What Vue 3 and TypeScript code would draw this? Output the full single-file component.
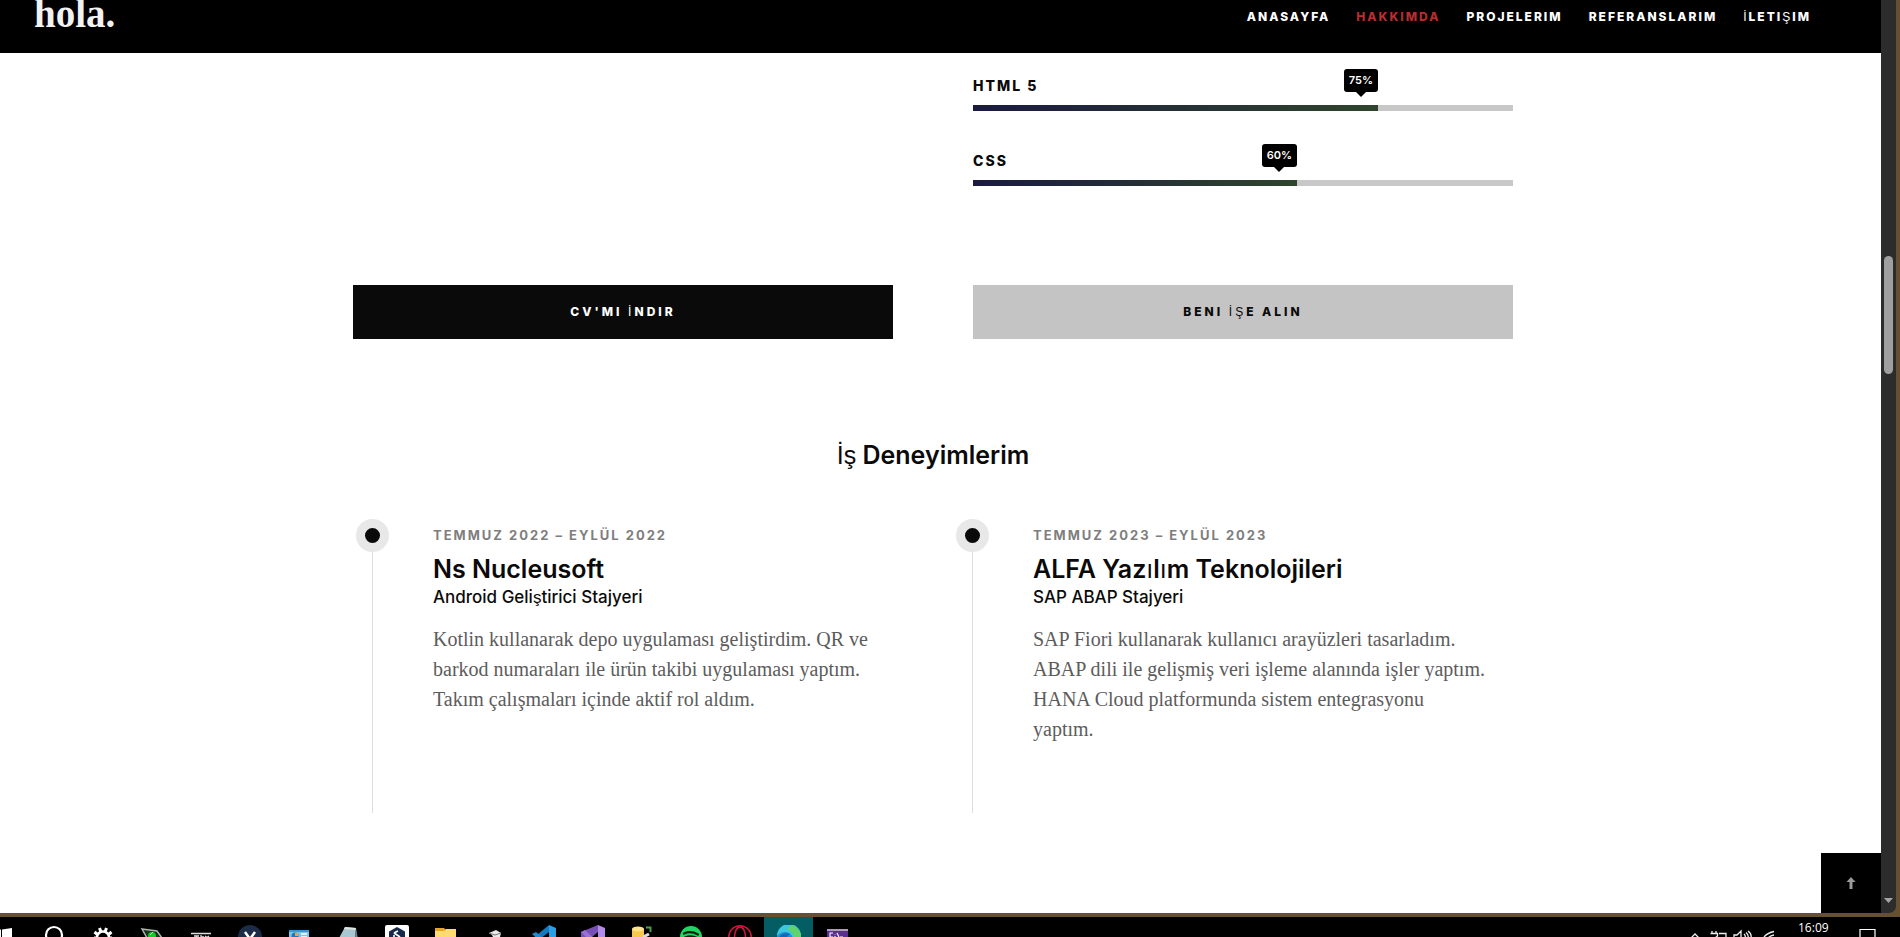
<script setup lang="ts">
import { h } from 'vue'

interface Skill { name: string; value: number }
interface Job { date: string; company: string; role: string; lines: string[] }

const nav: string[] = ['ANASAYFA', 'HAKKIMDA', 'PROJELERIM', 'REFERANSLARIM', 'İLETIŞIM']
const active = 'HAKKIMDA'

const skills: Skill[] = [
  { name: 'HTML 5', value: 75 },
  { name: 'CSS', value: 60 },
]

const jobs: Job[] = [
  {
    date: 'TEMMUZ 2022 – EYLÜL 2022',
    company: 'Ns Nucleusoft',
    role: 'Android Geliştirici Stajyeri',
    lines: [
      'Kotlin kullanarak depo uygulaması geliştirdim. QR ve',
      'barkod numaraları ile ürün takibi uygulaması yaptım.',
      'Takım çalışmaları içinde aktif rol aldım.',
    ],
  },
  {
    date: 'TEMMUZ 2023 – EYLÜL 2023',
    company: 'ALFA Yazılım Teknolojileri',
    role: 'SAP ABAP Stajyeri',
    lines: [
      'SAP Fiori kullanarak kullanıcı arayüzleri tasarladım.',
      'ABAP dili ile gelişmiş veri işleme alanında işler yaptım.',
      'HANA Cloud platformunda sistem entegrasyonu',
      'yaptım.',
    ],
  },
]

// Turkish-only letters are set in a lighter face than the rest of the word.
const Tr = (props: { text: string }) =>
  props.text
    .split(/([İŞşı]+)/)
    .filter(Boolean)
    .map((part) => (/[İŞşı]/.test(part) ? h('span', { class: 'tr-light' }, part) : part))
Tr.props = ['text']
</script>

<template>
  <div class="desktop">
    <div class="window">
      <div class="page">
        <header class="header">
          <a class="logo" href="#">hola.</a>
          <nav class="nav">
            <a v-for="item in nav" :key="item" href="#" :class="{ active: item === active }"><Tr :text="item" /></a>
          </nav>
        </header>

        <main class="content">
          <section class="skills">
            <div v-for="skill in skills" :key="skill.name" class="skill">
              <span class="skill-name">{{ skill.name }}</span>
              <div class="track" role="progressbar" :aria-label="skill.name" :aria-valuenow="skill.value">
                <div class="fill" :style="{ width: skill.value + '%' }">
                  <span class="badge">{{ skill.value }}%</span>
                </div>
              </div>
            </div>
          </section>

          <div class="actions">
            <a class="btn dark" href="#"><Tr text="CV'MI İNDIR" /></a>
            <a class="btn light" href="#"><Tr text="BENI İŞE ALIN" /></a>
          </div>

          <h2 class="heading"><Tr text="İş Deneyimlerim" /></h2>

          <section class="timeline">
            <article v-for="job in jobs" :key="job.company" class="job">
              <div class="rail"><span class="dot"></span><span class="line"></span></div>
              <div class="job-body">
                <p class="date">{{ job.date }}</p>
                <h3 class="company"><Tr :text="job.company" /></h3>
                <h4 class="role"><Tr :text="job.role" /></h4>
                <p class="text">{{ job.lines.join('\n') }}</p>
              </div>
            </article>
          </section>
        </main>

        <button class="to-top" type="button" aria-label="Yukarı">
          <svg width="10" height="14" viewBox="0 0 10 14"><path d="M5 1 9.500 6H6.500V13H3.500V6H.500z" fill="#999" /></svg>
        </button>
      </div>
      <div class="scrollbar">
        <span class="thumb"></span>
        <svg class="down" width="9" height="5" viewBox="0 0 9 5"><path d="M0 0H9L4.500 5z" fill="#a5a5a5" /></svg>
      </div>
    </div>

    <footer class="taskbar">
      <div class="apps">
        <span class="app start"><svg viewBox="0 0 24 24"><path d="M0 5.500 9 4.500V12H0zM10 4.400 20 3V12H10zM0 13H9V20L0 19zM10 13H20V22L10 20z" fill="#fff" /></svg></span>
        <span class="app"><svg viewBox="0 0 24 24"><circle cx="12" cy="10" r="8" fill="none" stroke="#fff" stroke-width="2.200" /></svg></span>
        <span class="app"><svg viewBox="0 0 24 24"><path d="M8.500 3 10 7M15.500 3 14 7M3.500 7 7 10M20.500 7 17 10M3 13H6M18 13H21" stroke="#fff" stroke-width="3" /><circle cx="12" cy="12.500" r="6" fill="none" stroke="#fff" stroke-width="2.500" /></svg></span>
        <span class="app"><svg viewBox="0 0 24 24"><path d="M2 4 17 6 22 13H7z" fill="#17351d" stroke="#aab5ac" stroke-width="1.500" /><circle cx="12" cy="11" r="4" fill="#16c92b" /><path d="M10 10 13 7" stroke="#9cff8b" /></svg></span>
        <span class="app"><svg viewBox="0 0 24 24"><path d="M2 8.500H22M5 11H10M7.500 11V14M12 10V14M12 12H15M16 11 20 14M20 11 16 14" stroke="#ddd" stroke-width="1.300" fill="none" /></svg></span>
        <span class="app"><svg viewBox="0 0 24 24"><circle cx="12" cy="12" r="12" fill="#1c2c48" /><path d="M7 7 12 14 17 7" fill="none" stroke="#fff" stroke-width="2.500" /></svg></span>
        <span class="app"><svg viewBox="0 0 24 24"><rect x="2" y="5" width="20" height="16" fill="#7cc3ee" /><rect x="2" y="5" width="20" height="2" fill="#3c94d8" /><circle cx="8" cy="11" r="3.500" fill="#1c76c4" /><path d="M8 11V7.500A3.500 3.500 0 0 1 11.500 11z" fill="#f3a23b" /><path d="M14 9H20M14 12H20" stroke="#fff" stroke-width="1.600" /></svg></span>
        <span class="app"><svg viewBox="0 0 24 24"><path d="M9 2 20 3 19 17 2 15z" fill="#a9c7d0" /><path d="M9 2 20 3 19.500 5 8 4z" fill="#dce5df" /><path d="M20 3 22 14 19 17z" fill="#6a8790" /></svg></span>
        <span class="app"><svg viewBox="0 0 24 24"><rect width="24" height="24" rx="2" fill="#fff" /><path d="M12 2 20 6.500V16L12 21 4 16V6.500z" fill="#17294b" /><path d="M9 8 15 12M9 10V14M13 6 9 8" stroke="#fff" stroke-width="1.600" /></svg></span>
        <span class="app"><svg viewBox="0 0 24 24"><path d="M1 3H10L12 5H22V20H1z" fill="#e5a524" /><path d="M1 6H10L12 4H22V20H1z" fill="#ffda70" /></svg></span>
        <span class="app"><svg viewBox="0 0 24 24"><path d="M6 8 13 5 18 8 17 12 11 14 9 10z" fill="#e9e9e9" /><path d="M6 8 12 10 18 8" fill="none" stroke="#777" /></svg></span>
        <span class="app"><svg viewBox="0 0 24 24"><path d="M17 0 24 3V21L17 24z" fill="#2a9fe5" /><path d="M17 0V7L4 17 0 14z" fill="#1679bd" /><path d="M0 9 4 7 17 18V24z" fill="#2389ce" /></svg></span>
        <span class="app"><svg viewBox="0 0 24 24"><path d="M17 0 24 3V21L17 24z" fill="#b58bea" /><path d="M17 0V7L4 18 0 16V7z" fill="#7650b6" /><path d="M0 7 4 5 17 17V24z" fill="#9a70d4" /></svg></span>
        <span class="app"><svg viewBox="0 0 24 24"><path d="M2 4V18H14V4z" fill="#f6c94b" /><ellipse cx="8" cy="4" rx="6" ry="2.500" fill="#ffe28a" /><path d="M16 2.500H20.500V7" fill="none" stroke="#4e9c49" stroke-width="2" /><path d="M13 12 19 9" stroke="#ddd" stroke-width="3" /></svg></span>
        <span class="app"><svg viewBox="0 0 24 24"><circle cx="12" cy="12" r="11" fill="#1ed760" /><path d="M5 8.500Q12 5.500 19 9.500M6 12.500Q12 10 18 13" fill="none" stroke="#05220e" stroke-width="2.200" stroke-linecap="round" /></svg></span>
        <span class="app"><svg viewBox="0 0 24 24" fill="none" stroke="#d4163c" stroke-width="1.500"><circle cx="12" cy="12" r="11.200" /><ellipse cx="12" cy="12" rx="5.500" ry="10" /></svg></span>
        <span class="app current"><svg viewBox="0 0 24 24"><circle cx="12" cy="12" r="12" fill="#1c8fd8" /><path d="M0 11A12 12 0 0 1 24 11Q24 16 17 16 15 8 9 7 3 7 0 11z" fill="#3cc7e0" /><path d="M15 0A12 12 0 0 1 24 12Q23 16 17 16 18 8 10 4z" fill="#60d36b" /><path d="M1 14Q5 6 13 9 9 11 10 16z" fill="#1368b4" /></svg></span>
        <span class="app"><svg viewBox="0 0 24 24"><rect x="1" y="4" width="21" height="17" fill="#5b2f8f" /><path d="M1 5H22" stroke="#cbbbdc" stroke-width="1.500" /><path d="M7 8H4V12H7M9 9V9.500M9 11V12M11 8 13 12M14 12H17" fill="none" stroke="#fff" stroke-width="1.100" /></svg></span>
      </div>
      <div class="tray">
        <svg width="100" height="20" viewBox="0 0 100 20" fill="none" stroke="#eee" stroke-width="1.300">
          <path d="M10 21 14 17 18 21" />
          <path d="M31 14V17M35 14V17M29.500 16.500H36.500V19L34 21M38 16.500H45V21" />
          <path d="M53 21V18H56L60 14V21M63 17Q65 19 64 21M65 15.500Q68 18 67 21M67 14Q71 17 70 21" />
          <path d="M83 20Q87 15.500 93 14.500M87 21Q89.500 18.500 93 18" />
        </svg>
        <time class="clock">16:09</time>
        <svg width="17" height="20" viewBox="0 0 17 20" fill="none" stroke="#fff" stroke-width="1.200"><path d="M1 21V12.500H16V21" /></svg>
      </div>
    </footer>
  </div>
</template>

<style>
body {
  margin: 0;
}
.tr-light {
  font-family: "Liberation Sans", Arial, sans-serif;
  font-weight: 400;
  line-height: 1;
}
</style>

<style scoped>
.desktop {
  display: flex;
  flex-direction: column;
  height: 100vh;
  overflow: hidden;
  background: #000;
  font-family: Inter, "Noto Sans", sans-serif;
  color: #0b0a0a;
}
.window {
  flex: 1;
  min-height: 0;
  display: flex;
  border: solid #67502f;
  border-width: 0 4px 4px 0;
  background: #67502f;
}
.page {
  position: relative;
  flex: 1;
  min-width: 0;
  overflow: hidden;
  background: #fff;
}
.header {
  display: flex;
  justify-content: space-between;
  align-items: flex-start;
  box-sizing: border-box;
  height: 53px;
  padding: 0 70px 0 34px;
  background: #000;
}
.logo {
  font: 700 39px/28px "Liberation Serif", serif;
  color: #f2f2f2;
  text-decoration: none;
}
.nav {
  display: flex;
  gap: 26px;
  padding-top: 7px;
}
.nav a {
  font-size: 12px;
  line-height: 20px;
  font-weight: 800;
  letter-spacing: 2px;
  color: #fff;
  text-decoration: none;
}
.nav a.active {
  color: #b52e31;
}
.content {
  max-width: 1160px;
  margin: 0 auto;
  padding: 23px 15px 0 0;
}
.skills {
  display: flex;
  flex-direction: column;
  gap: 40px;
  width: calc(50% - 40px);
  margin-left: auto;
}
.skill {
  display: flex;
  flex-direction: column;
  gap: 9px;
}
.skill-name {
  font-size: 14px;
  line-height: 20px;
  font-weight: 800;
  letter-spacing: 2px;
}
.track {
  height: 6px;
  background: #c8c8c8;
}
.fill {
  position: relative;
  height: 6px;
  background: linear-gradient(90deg, #1a1a40, #2f452c);
}
.badge {
  position: absolute;
  right: 0;
  bottom: 19px;
  padding: 0 5px;
  border-radius: 3px;
  background: #000;
  color: #fff;
  font-size: 11px;
  line-height: 23px;
  font-weight: 600;
}
.badge::after {
  content: "";
  position: absolute;
  left: 50%;
  top: 100%;
  margin-left: -5px;
  border: 5px solid transparent;
  border-top-color: #000;
  border-bottom: 0;
}
.actions {
  display: grid;
  grid-template-columns: 1fr 1fr;
  gap: 80px;
  margin-top: 99px;
}
.btn {
  font-size: 12px;
  line-height: 54px;
  font-weight: 800;
  letter-spacing: 3px;
  text-align: center;
  text-decoration: none;
}
.dark {
  background: #0b0a0a;
  color: #fff;
}
.light {
  background: #c4c4c4;
  color: #0b0a0a;
}
.heading {
  margin: 100px 0 48px;
  font-size: 25px;
  line-height: 32px;
  font-weight: 600;
  text-align: center;
}
.timeline {
  display: grid;
  grid-template-columns: 1fr 1fr;
  gap: 40px;
}
.job {
  display: flex;
  gap: 44px;
  min-height: 294px;
}
.rail {
  display: flex;
  flex-direction: column;
  align-items: center;
  width: 33px;
  flex: none;
  margin-left: 3px;
}
.dot {
  box-sizing: border-box;
  width: 33px;
  height: 33px;
  border: 9px solid #e8e8e8;
  border-radius: 50%;
  background: #0b0a0a;
}
.line {
  flex: 1;
  width: 1px;
  background: #dedede;
}
.job-body {
  flex: 1;
  padding-top: 6px;
}
.date {
  margin: 0;
  font-size: 13px;
  line-height: 20px;
  font-weight: 700;
  letter-spacing: 2px;
  color: #7e7e7e;
}
.company {
  margin: 8px 0 0;
  font-size: 25px;
  line-height: 32px;
  font-weight: 600;
}
.role {
  margin: 0;
  font-size: 17px;
  line-height: 24px;
  font-weight: 500;
}
.text {
  margin: 15px 0 0;
  font-family: "Liberation Serif", serif;
  font-size: 20px;
  line-height: 30px;
  white-space: pre-line;
  color: #5c5c5c;
}
.to-top {
  position: absolute;
  right: 0;
  bottom: 0;
  display: grid;
  place-items: center;
  width: 60px;
  height: 60px;
  padding: 0;
  border: 0;
  background: #000;
}
.scrollbar {
  display: flex;
  flex-direction: column;
  justify-content: space-between;
  align-items: center;
  width: 15px;
  padding: 256px 0 10px;
  box-sizing: border-box;
  border-radius: 0 0 7px 0;
  background: #2c2c2c;
}
.thumb {
  width: 9px;
  height: 118px;
  border-radius: 5px;
  background: #9f9f9f;
}
.taskbar {
  display: flex;
  justify-content: space-between;
  height: 20px;
  overflow: hidden;
  background: #000;
}
.apps {
  display: flex;
}
.app {
  display: flex;
  justify-content: center;
  align-items: flex-start;
  width: 49px;
  padding-top: 8px;
}
.app svg {
  width: 24px;
  height: 24px;
  flex: none;
}
.app.start {
  width: 29px;
  justify-content: flex-start;
}
.app.start svg {
  margin-left: -8px;
}
.app.current {
  background: #035d62;
}
.tray {
  display: flex;
  padding-right: 24px;
}
.clock {
  width: 61px;
  margin-left: 17px;
  color: #fff;
  font: 12px/22px "Open Sans", sans-serif;
}
</style>
